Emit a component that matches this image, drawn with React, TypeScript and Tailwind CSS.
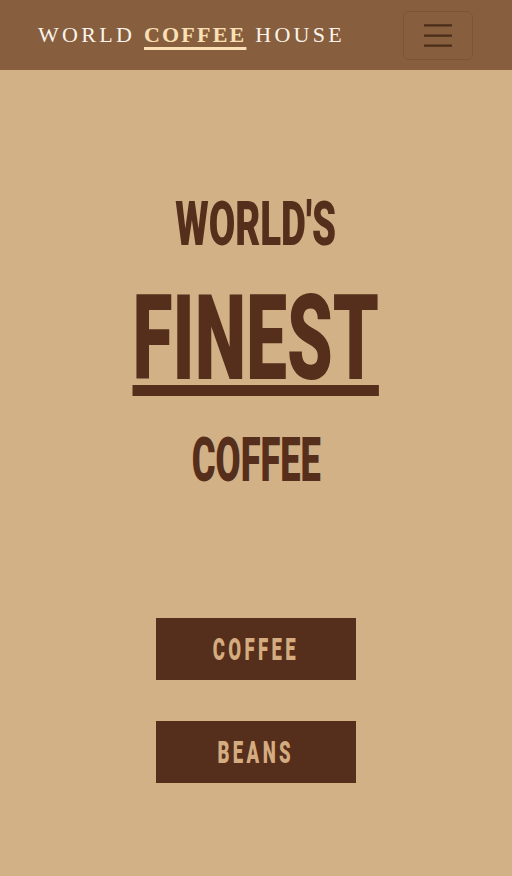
import { useState } from "react";

const display = "font-['Roboto','Inter',sans-serif] font-black uppercase";

function Navbar() {
  const [open, setOpen] = useState(false);

  return (
    <nav className="bg-[#875f3e] h-[70px] pl-[38px] pr-[39px] flex items-center justify-between">
      <a href="#" className="font-['Liberation_Serif',serif] text-[22px] leading-none tracking-[0.15em] text-[#fbf4ea] uppercase whitespace-nowrap">
        World{" "}
        <span className="font-bold tracking-[0.1em] text-[#fbe0b6] underline decoration-[3px] underline-offset-[5px]">Coffee</span>{" "}
        House
      </a>
      <button
        onClick={() => setOpen(!open)}
        className="w-[70px] h-[49px] rounded-md border border-[#7b5636] flex items-center justify-center"
        aria-label="Toggle navigation"
      >
        <svg width="30" height="24" viewBox="0 0 30 24" fill="none">
          <path d="M1 2.3h28M1 12.7h28M1 22.7h28" stroke="#4b2d1a" strokeWidth="2.2" />
        </svg>
      </button>
    </nav>
  );
}

export default function App() {
  const buttons = ["Coffee", "Beans"];

  return (
    <div className="min-h-[876px] bg-[#d2b186] text-[#552e1c]">
      <Navbar />
      <main className="flex flex-col items-center pt-[123px]">
        <h1 className="flex flex-col items-center">
          <span className={`${display} text-[62px] leading-none inline-block scale-x-[0.62]`}>World's</span>
          <span className={`${display} text-[118px] leading-none inline-block mt-[25px] scale-x-[0.62] underline decoration-[11px] underline-offset-[6px]`}>Finest</span>
          <span className={`${display} text-[62px] leading-none inline-block mt-[31px] scale-x-[0.585]`}>Coffee</span>
        </h1>
        <div className="flex flex-col gap-[41px] mt-[127px]">
          {buttons.map((b) => (
            <a
              key={b}
              href="#"
              className="w-[200px] h-[62px] bg-[#552e1c] flex items-center justify-center"
            >
              <span className={`${display} text-[31px] leading-none tracking-[0.18em] text-[#d4ac7f] inline-block scale-x-[0.6]`}>{b}</span>
            </a>
          ))}
        </div>
      </main>
    </div>
  );
}
